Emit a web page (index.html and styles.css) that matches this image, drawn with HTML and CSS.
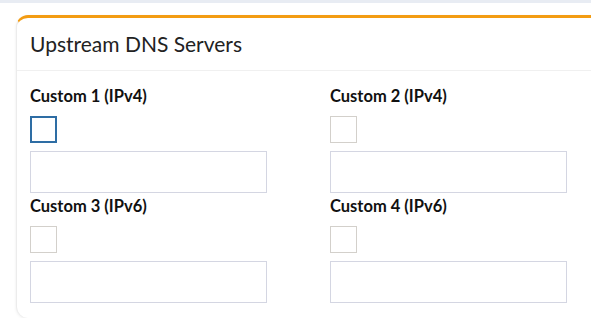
FILE: index.html
```html
<!DOCTYPE html>
<html lang="en">
<head>
  <meta charset="UTF-8">
  <title>Upstream DNS Servers</title>
  <link rel="stylesheet" href="styles.css">
</head>
<body>
  <div class="topbar"></div>
  <div class="page">
    <div class="card">
      <div class="card-header">
        <h3>Upstream DNS Servers</h3>
      </div>
      <div class="card-body">
        <div class="field">
          <label>Custom 1 (IPv4)</label>
          <input type="checkbox" class="check focus">
          <input type="text" class="text">
        </div>
        <div class="field">
          <label>Custom 2 (IPv4)</label>
          <input type="checkbox" class="check">
          <input type="text" class="text">
        </div>
        <div class="field">
          <label>Custom 3 (IPv6)</label>
          <input type="checkbox" class="check">
          <input type="text" class="text">
        </div>
        <div class="field">
          <label>Custom 4 (IPv6)</label>
          <input type="checkbox" class="check">
          <input type="text" class="text">
        </div>
      </div>
    </div>
  </div>
</body>
</html>
```

FILE: styles.css
```css
body { margin: 0; background: #fff; font-family: 'Lato', sans-serif; color: #222; overflow: hidden; }
.topbar { height: 3px; background: #e8ecf3; }
.page { padding: 12px 0 0 16px; }
.card { width: 640px; background: #fff; border-top: 3px solid #f39c12; border-left: 1px solid #ececec; border-radius: 12px; box-shadow: 0 1px 3px rgba(0,0,0,0.08); }
.card-header { padding: 13px 13px; border-bottom: 1px solid #f0f0f0; }
.card-header h3 { margin: 0; font-size: 21px; font-weight: 400; line-height: 26px; color: #222; }
.card-body { display: grid; grid-template-columns: 300px 300px; padding: 15px 13px 12px; }
.field { display: flex; flex-direction: column; align-items: flex-start; margin-bottom: 3px; }
.field label { font-size: 16.5px; font-weight: 700; line-height: 20px; color: #111; margin-bottom: 10px; }
.check { appearance: none; margin: 0 0 8px; width: 27px; height: 27px; border: 1px solid #d3d0cb; background: #fff; }
.check.focus { border: 2px solid #2e6da4; }
.text { box-sizing: border-box; margin: 0; width: 237px; height: 42px; border: 1px solid #d4d6e2; background: #fff; }
```
